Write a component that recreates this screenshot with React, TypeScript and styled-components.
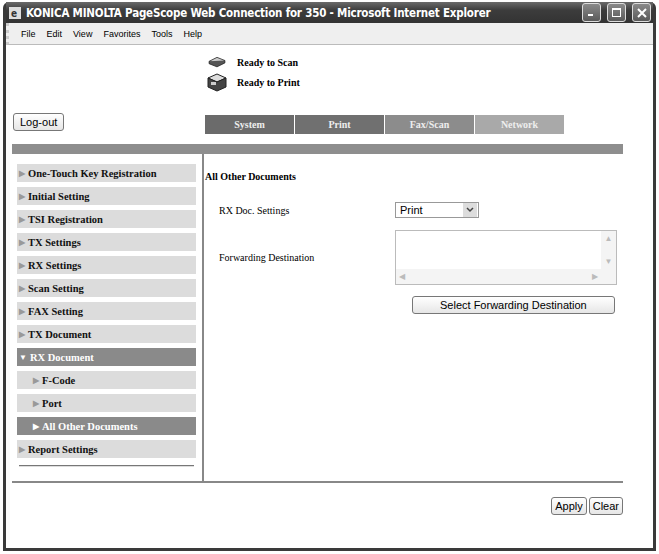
import React from "react";
import styled, { createGlobalStyle } from "styled-components";

const Global = createGlobalStyle`
  html, body { margin: 0; padding: 0; background: #fff; }
  body { width: 659px; height: 554px; overflow: hidden; font-family: "Liberation Serif", serif; }
`;

const Window = styled.div`
  width: 653px; height: 549px; margin: 2px 0 0 3px;
  background: #3a3a3a; border-radius: 6px 6px 0 0;
  display: flex; flex-direction: column; padding: 0 3px 3px 3px; box-sizing: border-box;
`;
const TitleBar = styled.div`
  height: 21px; display: flex; align-items: center; gap: 4px; padding: 0 0 0 2px;
  background: linear-gradient(#6a6a6a, #3c3c3c 40%, #333);
  color: #fff; font: bold 11.5px "DejaVu Sans Condensed", "DejaVu Sans", sans-serif;
`;
const TitleText = styled.span` flex: 1; white-space: nowrap; letter-spacing: -0.2px;`;
const WinBtn = styled.div`
  width: 17px; height: 17px; border: 1px solid #ddd; border-radius: 3px;
  background: linear-gradient(#8a8a8a, #5a5a5a); display: flex; align-items: center; justify-content: center;
  margin-right: 2px;
`;
const MenuBar = styled.div`
  height: 21px; background: #efefef; border-bottom: 1px solid #bbb; display: flex; align-items: center;
  padding-left: 12px; gap: 11px; font: 9px "Liberation Sans", Arial, sans-serif; color: #000;
  border-left: 3px dotted #ccc;
`;
const MenuItem = styled.span``;
const Content = styled.div`
  flex: 1; background: #fff; display: flex; flex-direction: column; padding: 0 30px 0 6px;
`;
const Header = styled.div` display: grid; grid-template-columns: 193px 1fr; height: 90px;`;
const LeftHead = styled.div` display: flex; align-items: flex-end; padding: 0 0 4px 1px;`;
const XPButton = styled.button<{ pad?: number }>`
  font: 11px "Liberation Sans", Arial, sans-serif; color: #000; background: linear-gradient(#fff, #e6e6e6);
  border: 1px solid #777; border-radius: 3px; padding: 0 ${(p) => p.pad ?? 6}px; height: 18px; cursor: default;
`;
const RightHead = styled.div` display: flex; flex-direction: column; justify-content: space-between; padding: 10px 0 0 0;`;
const Status = styled.div` display: flex; flex-direction: column; gap: 3px;`;
const StatusRow = styled.div` display: flex; align-items: center; gap: 8px; font: bold 10px "Liberation Serif", serif;`;
const Tabs = styled.div` display: flex; margin-bottom: 1px;`;
const Tab = styled.div<{ bg: string }>`
  width: 89px; height: 19px; margin-right: 1px; background: ${(p) => p.bg}; color: #eee;
  font: bold 10px "Liberation Serif", serif; display: flex; align-items: center; justify-content: center;
`;
const Bar = styled.div` height: 10px; background: #8e8e8e; margin-top: 9px;`;
const Main = styled.div` display: grid; grid-template-columns: 192px 1fr; height: 327px;`;
const Nav = styled.div` padding: 10px 6px 0 5px; border-right: 2px solid #888; display: flex; flex-direction: column; gap: 5px;`;
const NavItem = styled.div<{ active?: boolean; sub?: boolean }>`
  height: 18px; background: ${(p) => (p.active ? "#8a8a8a" : "#dcdcdc")};
  color: ${(p) => (p.active ? "#fff" : "#111")}; font: bold 10.5px "Liberation Serif", serif;
  display: flex; align-items: center; gap: 3px; padding-left: ${(p) => (p.sub ? 16 : 2)}px;
`;
const Arrow = styled.span<{ active?: boolean }>` color: ${(p) => (p.active ? "#fff" : "#999")}; font-size: 8px;`;
const NavRule = styled.div` height: 1px; background: #777; margin: 2px 2px 0; border-bottom: 1px solid #ddd;`;
const Panel = styled.div` padding: 17px 0 0 1px; font: 10px "Liberation Serif", serif;`;
const PanelTitle = styled.div` font-weight: bold; margin-bottom: 20px;`;
const Row = styled.div` display: grid; grid-template-columns: 176px 1fr; align-items: center; padding-left: 14px; margin-bottom: 12px;`;
const Select = styled.div`
  width: 84px; height: 16px; border: 1px solid #999; display: flex; align-items: center; justify-content: space-between;
  font: 11px "Liberation Sans", Arial, sans-serif; padding-left: 4px; box-sizing: border-box;
`;
const DropBtn = styled.div` width: 14px; height: 14px; margin-right: 1px; background: #ddd; display: flex; align-items: center; justify-content: center;`;
const TextArea = styled.div` width: 222px; height: 55px; border: 1px solid #bbb; box-sizing: border-box; display: grid; grid-template-columns: 1fr 15px; grid-template-rows: 1fr 15px;`;
const Scroll = styled.div` background: #f4f4f4; color: #bbb; font-size: 8px; display: flex; justify-content: space-between; align-items: center; padding: 0 3px;`;
const VScroll = styled.div` background: #f4f4f4; color: #bbb; font-size: 8px; display: flex; flex-direction: column; justify-content: space-between; align-items: center; padding: 3px 0;`;
const Corner = styled.div` background: #f4f4f4;`;
const ButtonLine = styled.div` padding-left: 207px; margin-top: -1px;`;
const Footer = styled.div` border-top: 2px solid #888; display: flex; justify-content: flex-end; gap: 2px; padding-top: 14px;`;

const Printer = ({ scan }: { scan?: boolean }) => (
  <svg width="24" height={scan ? 15 : 19} viewBox="0 0 24 19">
    {scan ? (
      <>
        <path d="M2 8 L12 3 L22 7 L12 12 Z" fill="#ccc" stroke="#222" />
        <path d="M2 8 L2 11 L12 15 L22 10 L22 7" fill="#555" stroke="#222" />
      </>
    ) : (
      <>
        <path d="M3 5 L12 1 L21 5 L12 9 Z" fill="#ddd" stroke="#222" />
        <path d="M3 5 L3 14 L12 18 L21 14 L21 5 L12 9 Z" fill="#444" stroke="#222" />
        <rect x="6" y="9" width="5" height="3" fill="#ccc" />
      </>
    )}
  </svg>
);

const nav: { t: string; active?: boolean; sub?: boolean; open?: boolean }[] = [
  { t: "One-Touch Key Registration" }, { t: "Initial Setting" }, { t: "TSI Registration" },
  { t: "TX Settings" }, { t: "RX Settings" }, { t: "Scan Setting" }, { t: "FAX Setting" },
  { t: "TX Document" }, { t: "RX Document", active: true, open: true }, { t: "F-Code", sub: true },
  { t: "Port", sub: true }, { t: "All Other Documents", sub: true, active: true }, { t: "Report Settings" },
];

export default function App() {
  return (
    <>
      <Global />
      <Window>
        <TitleBar>
          <svg width="14" height="14" viewBox="0 0 14 14"><rect x="1" y="1" width="12" height="12" fill="#ddd" /><text x="3" y="11" fontSize="10" fill="#333">e</text></svg>
          <TitleText>KONICA MINOLTA PageScope Web Connection for 350 - Microsoft Internet Explorer</TitleText>
          <WinBtn><svg width="9" height="9"><rect x="1" y="6" width="5" height="2" fill="#fff" /></svg></WinBtn>
          <WinBtn><svg width="9" height="9"><rect x="0.5" y="0.5" width="8" height="8" fill="none" stroke="#fff" /><rect x="0" y="0" width="9" height="2" fill="#fff" /></svg></WinBtn>
          <WinBtn><svg width="10" height="10"><path d="M1 1 L9 9 M9 1 L1 9" stroke="#fff" strokeWidth="2" /></svg></WinBtn>
        </TitleBar>
        <MenuBar>
          {["File", "Edit", "View", "Favorites", "Tools", "Help"].map((m) => (
            <MenuItem key={m}>{m}</MenuItem>
          ))}
        </MenuBar>
        <Content>
          <Header>
            <LeftHead><XPButton>Log-out</XPButton></LeftHead>
            <RightHead>
              <Status>
                <StatusRow><Printer scan />Ready to Scan</StatusRow>
                <StatusRow><Printer />Ready to Print</StatusRow>
              </Status>
              <Tabs>
                <Tab bg="#6b6b6b">System</Tab>
                <Tab bg="#707070">Print</Tab>
                <Tab bg="#8c8c8c">Fax/Scan</Tab>
                <Tab bg="#a9a9a9">Network</Tab>
              </Tabs>
            </RightHead>
          </Header>
          <Bar />
          <Main>
            <Nav>
              {nav.map((n) => (
                <NavItem key={n.t} active={n.active} sub={n.sub}>
                  <Arrow active={n.active}>{n.open ? "▼" : "▶"}</Arrow>{n.t}
                </NavItem>
              ))}
              <NavRule />
            </Nav>
            <Panel>
              <PanelTitle>All Other Documents</PanelTitle>
              <Row>
                <span>RX Doc. Settings</span>
                <Select>Print<DropBtn><svg width="8" height="6"><path d="M1 1 L4 4 L7 1" stroke="#444" strokeWidth="1.5" fill="none" /></svg></DropBtn></Select>
              </Row>
              <Row>
                <span>Forwarding Destination</span>
                <TextArea>
                  <div />
                  <VScroll><span>▲</span><span>▼</span></VScroll>
                  <Scroll><span>◀</span><span>▶</span></Scroll>
                  <Corner />
                </TextArea>
              </Row>
              <ButtonLine><XPButton pad={27}>Select Forwarding Destination</XPButton></ButtonLine>
            </Panel>
          </Main>
          <Footer>
            <XPButton pad={3}>Apply</XPButton>
            <XPButton pad={3}>Clear</XPButton>
          </Footer>
        </Content>
      </Window>
    </>
  );
}
